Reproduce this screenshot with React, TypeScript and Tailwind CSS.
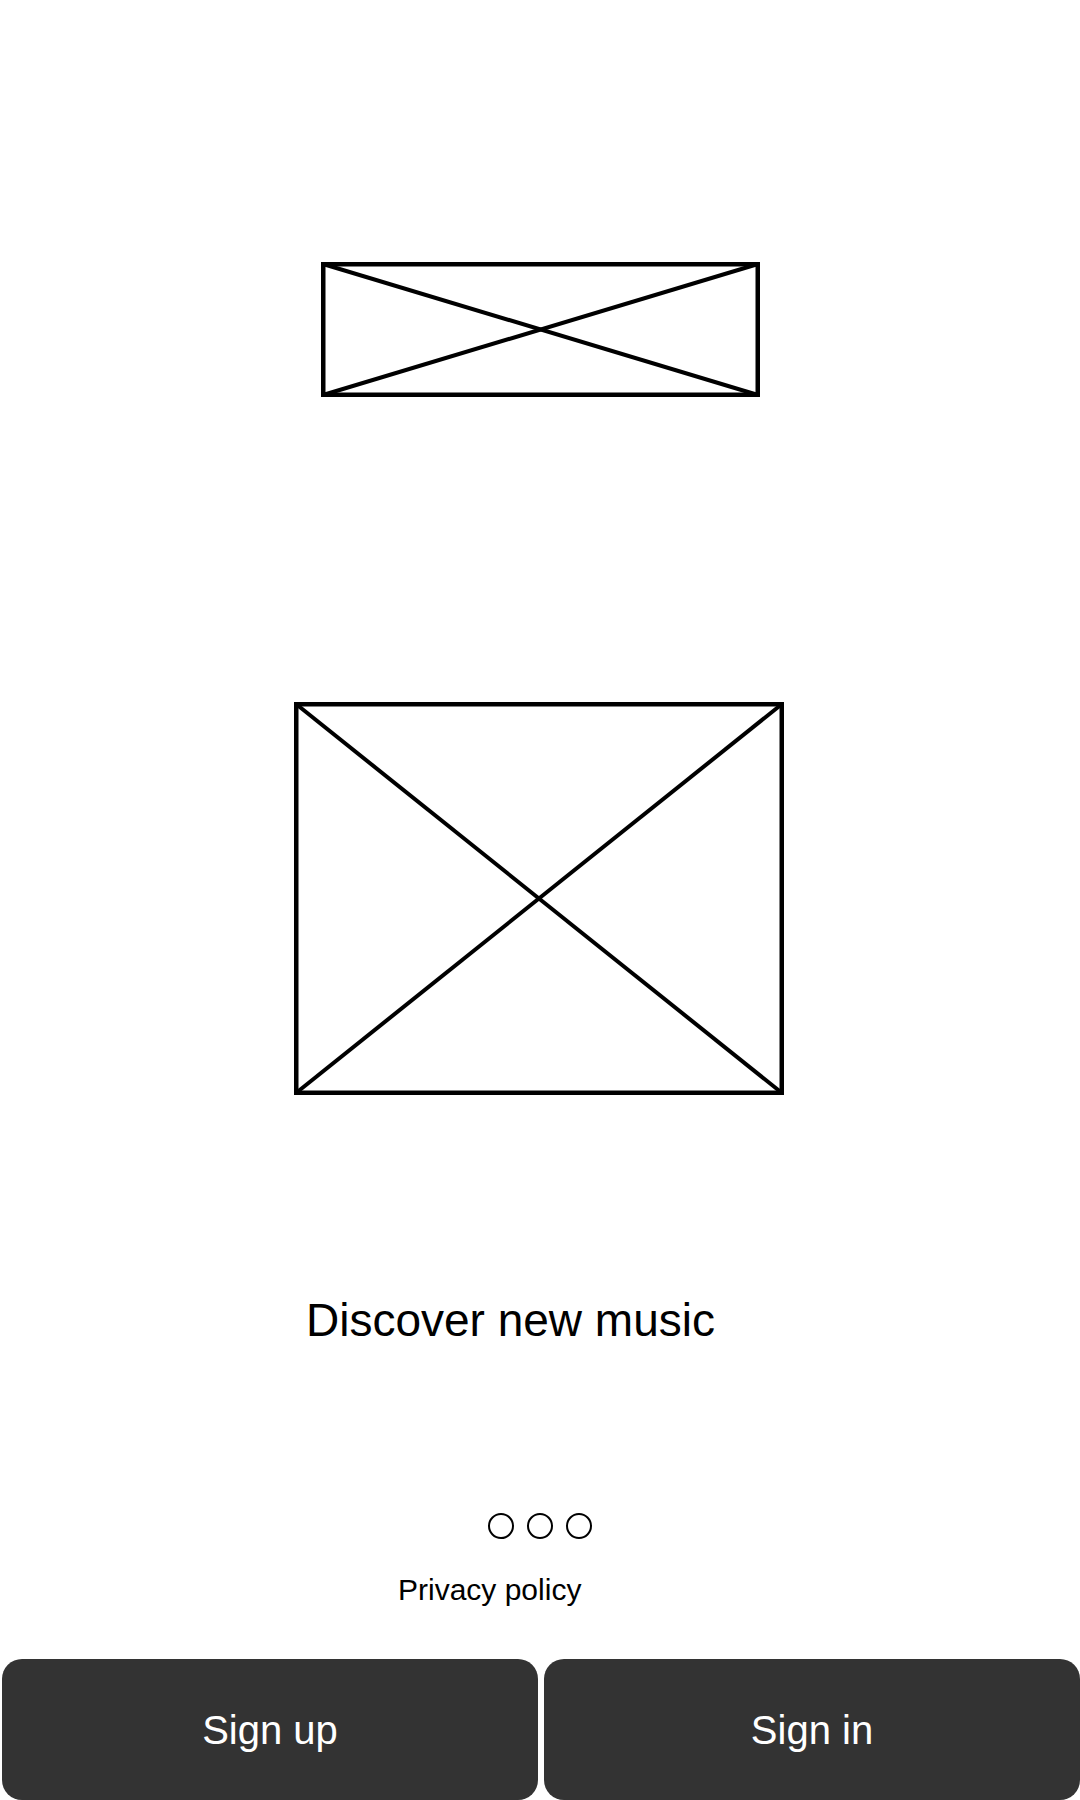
const Placeholder = ({ w, h }: { w: number; h: number }) => {
  return (
    <svg width={w} height={h} viewBox={`0 0 ${w} ${h}`} className="block shrink-0">
      <rect x={2.25} y={2.25} width={w - 4.5} height={h - 4.5} fill="none" stroke="#000" strokeWidth={4.5} />
      <line x1={2} y1={2} x2={w - 2} y2={h - 2} stroke="#000" strokeWidth={4} />
      <line x1={w - 2} y1={2} x2={2} y2={h - 2} stroke="#000" strokeWidth={4} />
    </svg>
  );
};

export default function App() {
  return (
    <div className="flex h-[1800px] w-[1080px] flex-col items-center bg-white font-['Liberation_Sans',Arial,sans-serif] text-black">
      <div className="mt-[262px]">
        <Placeholder w={439} h={135} />
      </div>
      <div className="mt-[305px] mr-[3px]">
        <Placeholder w={490} h={393} />
      </div>

      <h1 className="mt-[199px] ml-[306px] self-start text-[46px] leading-[53px] font-normal">
        Discover new music
      </h1>

      <div className="mt-[166px] flex gap-[13px]">
        <span className="h-[26px] w-[26px] rounded-full border-2 border-black" />
        <span className="h-[26px] w-[26px] rounded-full border-2 border-black" />
        <span className="h-[26px] w-[26px] rounded-full border-2 border-black" />
      </div>

      <a className="mt-[34px] ml-[398px] self-start text-[30px] leading-[34px] text-black">
        Privacy policy
      </a>

      <div className="mt-auto flex w-full gap-[6px] pl-[2px]">
        <button className="flex h-[141px] flex-1 items-center justify-center rounded-[20px] bg-[#333333] text-[40px] text-white">
          Sign up
        </button>
        <button className="flex h-[141px] flex-1 items-center justify-center rounded-[20px] bg-[#333333] text-[40px] text-white">
          Sign in
        </button>
      </div>
    </div>
  );
}
